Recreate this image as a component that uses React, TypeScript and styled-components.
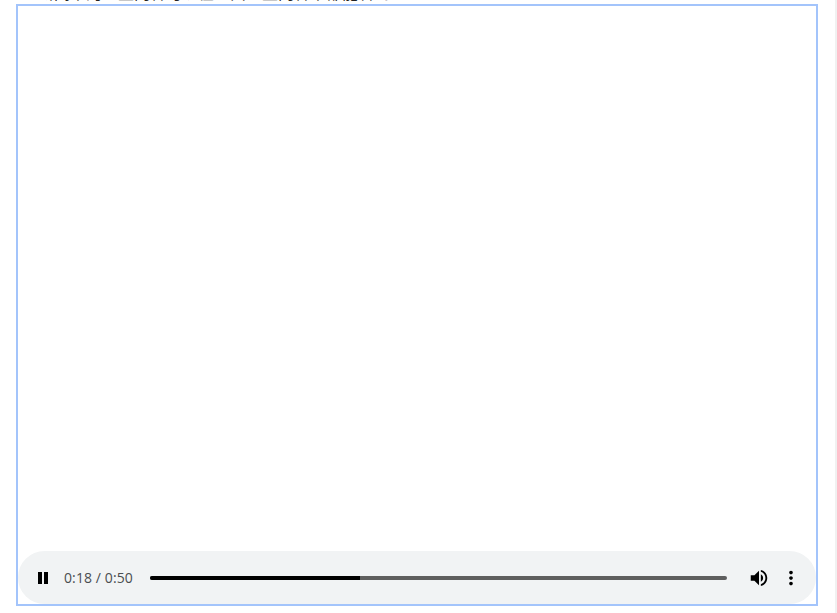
import React from 'react';
import styled, { createGlobalStyle } from 'styled-components';

const GlobalStyle = createGlobalStyle`
    html, body {
        margin: 0;
        padding: 0;
        height: 100%;
        overflow: hidden;
        background: #fff;
    }
`;

const played = (360 - 150) / (727 - 150);

let Page = styled.div`
    display: flex;
    height: 613px;
    overflow: hidden;
`;

let Content = styled.div`
    flex: 1;
    min-width: 0;
    display: flex;
    flex-direction: column;
    padding: 0 17px 0 16px;
`;

let Scrollbar = styled.div`
    width: 2px;
    background: #f1f1f1;
`;

let Caption = styled.p`
    margin: -20px 0 0;
    padding-left: 22px;
    height: 24px;
    font-family: "Noto Sans CJK SC", "Liberation Sans", sans-serif;
    font-size: 16px;
    line-height: 24px;
    color: #222;
    white-space: nowrap;
`;

let Player = styled.div`
    box-sizing: border-box;
    height: 602px;
    border: 2px solid #a3c4fb;
    display: flex;
    flex-direction: column;
    justify-content: flex-end;
`;

let Controls = styled.div`
    box-sizing: border-box;
    height: 53px;
    border-radius: 27px;
    background: #f1f3f4;
    display: flex;
    align-items: center;
    padding: 1px 14px 0 20px;
`;

let PauseIcon = styled.svg`
    width: 10px;
    height: 12px;
    fill: #000;
    flex: none;
`;

let Time = styled.span`
    margin: 0 0 2px 16px;
    font-family: "Open Sans", "Liberation Sans", sans-serif;
    font-size: 14px;
    letter-spacing: 0.1px;
    color: #4a4d50;
    white-space: nowrap;
`;

let Track = styled.div`
    flex: 1;
    height: 4px;
    margin-left: 17px;
    border-radius: 2px;
    background: #5e5e5e;
    overflow: hidden;
`;

let Progress = styled.div`
    height: 100%;
    background: #000;
`;

let ControlIcon = styled.svg<{ $gap: number }>`
    width: 22px;
    height: 22px;
    margin-left: ${(props) => props.$gap}px;
    fill: #000;
    flex: none;
`;

export default function App() {
    return (
        <Page>
            <GlobalStyle />
            <Content>
                <Caption>新闻中的一些内容可以在上面一些内容中都能看到上</Caption>
                <Player>
                    <Controls>
                        <PauseIcon viewBox="0 0 10 12">
                            <path d="M0 0h4v12H0zM6 0h4v12H6z" />
                        </PauseIcon>
                        <Time>0:18 / 0:50</Time>
                        <Track>
                            <Progress style={{ width: `${played * 100}%` }} />
                        </Track>
                        <ControlIcon $gap={21} viewBox="0 0 24 24">
                            <path d="M3 9v6h4l5 5V4L7 9H3zm13.5 3c0-1.77-1.02-3.29-2.5-4.03v8.05c1.48-.73 2.5-2.25 2.5-4.02zM14 3.23v2.06c2.89.86 5 3.54 5 6.71s-2.11 5.85-5 6.71v2.06c4.01-.91 7-4.49 7-8.77s-2.99-7.86-7-8.77z" />
                        </ControlIcon>
                        <ControlIcon $gap={10} viewBox="0 0 24 24">
                            <path d="M12 8c1.1 0 2-.9 2-2s-.9-2-2-2-2 .9-2 2 .9 2 2 2zm0 2c-1.1 0-2 .9-2 2s.9 2 2 2 2-.9 2-2-.9-2-2-2zm0 6c-1.1 0-2 .9-2 2s.9 2 2 2 2-.9 2-2-.9-2-2-2z" />
                        </ControlIcon>
                    </Controls>
                </Player>
            </Content>
            <Scrollbar />
        </Page>
    );
}
